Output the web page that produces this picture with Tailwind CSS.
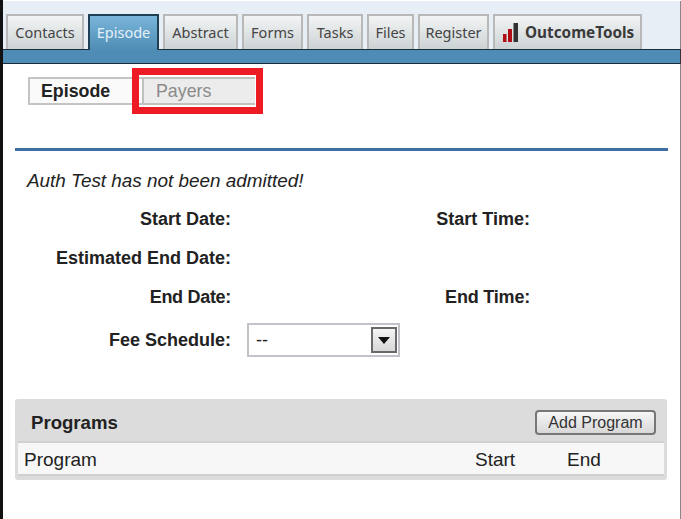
<!DOCTYPE html>
<html>
<head>
<meta charset="utf-8">
<script src="https://cdn.jsdelivr.net/npm/@tailwindcss/browser@4"></script>
</head>
<body class="bg-white">
<div class="relative w-[681px] h-[519px] overflow-hidden bg-white border-l-[3px] border-l-[#111] font-['Liberation_Sans',Arial,sans-serif] text-[#222]">
  <div class="h-px bg-white -ml-[3px]"></div>
  <div class="h-[48px] bg-[#e8eef6] flex items-end gap-[4px] pl-[3px] font-['Noto_Sans',sans-serif] text-[14.5px] text-[#444] border-r border-r-[#888]">
    <div class="w-[78px] h-[35px] flex items-center justify-center border-2 border-b-0 border-[#b8b8b8] bg-gradient-to-b from-[#f3f5f5] to-[#ccd2d4]">Contacts</div>
    <div class="w-[71px] h-[36px] flex items-center justify-center border-2 border-b-0 border-[#1f3f55] bg-gradient-to-b from-[#7ab6da] to-[#4f8db5] text-[#e4f0f7] relative z-10 -mb-px">Episode</div>
    <div class="w-[75px] h-[35px] flex items-center justify-center border-2 border-b-0 border-[#b8b8b8] bg-gradient-to-b from-[#f3f5f5] to-[#ccd2d4]">Abstract</div>
    <div class="w-[61px] h-[35px] flex items-center justify-center border-2 border-b-0 border-[#b8b8b8] bg-gradient-to-b from-[#f3f5f5] to-[#ccd2d4]">Forms</div>
    <div class="w-[56px] h-[35px] flex items-center justify-center border-2 border-b-0 border-[#b8b8b8] bg-gradient-to-b from-[#f3f5f5] to-[#ccd2d4]">Tasks</div>
    <div class="w-[47px] h-[35px] flex items-center justify-center border-2 border-b-0 border-[#b8b8b8] bg-gradient-to-b from-[#f3f5f5] to-[#ccd2d4]">Files</div>
    <div class="w-[71px] h-[35px] flex items-center justify-center border-2 border-b-0 border-[#b8b8b8] bg-gradient-to-b from-[#f3f5f5] to-[#ccd2d4]">Register</div>
    <div class="w-[149px] h-[35px] flex items-center pl-[8px] gap-[6px] border-2 border-b-0 border-[#b8b8b8] bg-gradient-to-b from-[#f3f5f5] to-[#ccd2d4] font-bold text-[15.3px] text-[#3a3a3a]">
      <svg width="16" height="20" viewBox="0 0 16 20" class="shrink-0"><rect x="0" y="11" width="3.5" height="8" fill="#b00d14"/><rect x="5" y="6" width="4" height="13" fill="#b00d14"/><rect x="10.5" y="0" width="4.5" height="19" fill="#333"/></svg>
      <span>OutcomeTools</span>
    </div>
  </div>
  <div class="h-[15px] bg-[#4e8bb5] border-y border-y-[#1c2c38] border-r border-r-[#333]"></div>
  <div class="border-r border-r-[#888] h-[455px] px-[12px]">
    <div class="flex pt-[13px] pl-[13px] h-[71px] border-b-[3px] border-b-[#3f6ea3] box-content -mb-[1px]">
      <div class="w-[114px] h-[28px] flex items-center pl-[11px] pt-px font-bold border-2 border-[#c4c4c4] border-r-0 bg-[#fafafa] text-[17.8px]">Episode</div>
      <div class="w-[113px] h-[28px] flex items-center pl-[12px] pt-px border-2 border-[#c0c0c0] border-r-0 bg-[#ececec] text-[#8a8a8a] text-[17.8px]">Payers</div>
    </div>
    <p class="italic text-[18.9px] mt-[21px] ml-[12px] leading-[20px]">Auth Test has not been admitted!</p>
    <div class="grid grid-cols-[216px_299px] text-[18px] font-bold justify-start mt-[18px] gap-y-[19px] leading-[20px]">
      <div class="text-right">Start Date:</div><div class="text-right">Start Time:</div>
      <div class="text-right">Estimated End Date:</div><div></div>
      <div class="text-right tracking-[-0.3px]">End Date:</div><div class="text-right tracking-[-0.2px]">End Time:</div>
    </div>
    <div class="flex items-center mt-[16px] h-[34px]">
      <div class="w-[216px] text-right text-[18px] font-bold">Fee Schedule:</div>
      <div class="ml-[16px] w-[153px] h-[34px] border-2 border-[#c2c2c8] flex items-center justify-between pl-[7px] pr-[1px] text-[18px]">
        <span>--</span>
        <span class="w-[26px] h-[26px] border-2 border-[#6a6a6a] bg-gradient-to-b from-[#f4f4f4] to-[#d8d8d8] flex items-center justify-center">
          <svg width="12" height="7" viewBox="0 0 12 7"><path d="M0 0h12L6 7z" fill="#111"/></svg>
        </span>
      </div>
    </div>
    <div class="mt-[42px] w-[652px] h-[81px] bg-[#dcdcdc] rounded-[3px] flex flex-col px-[3px] pb-[4px]">
      <div class="h-[44px] flex items-center justify-between pt-[6px] pl-[13px] pr-[8px] border-b-2 border-b-[#d0d0d0]">
        <span class="font-bold text-[18.6px] text-[#222]">Programs</span>
        <button class="w-[121px] h-[25px] border-2 border-[#777] rounded-[4px] bg-gradient-to-b from-[#f6f6f6] to-[#d8d8d8] text-[16px] text-[#333] flex items-center justify-center">Add Program</button>
      </div>
      <div class="flex-1 bg-[#f7f7f7] flex items-center pt-[3px] pl-[6px] text-[19px] border-b-2 border-b-[#d0d0d0]">
        <span class="w-[451px]">Program</span>
        <span class="w-[92px]">Start</span>
        <span>End</span>
      </div>
    </div>
  </div>
  <div class="absolute left-[129px] top-[68px] w-[131px] h-[46px] border-[7px] border-[#ed1c24]"></div>
</div>
</body>
</html>
